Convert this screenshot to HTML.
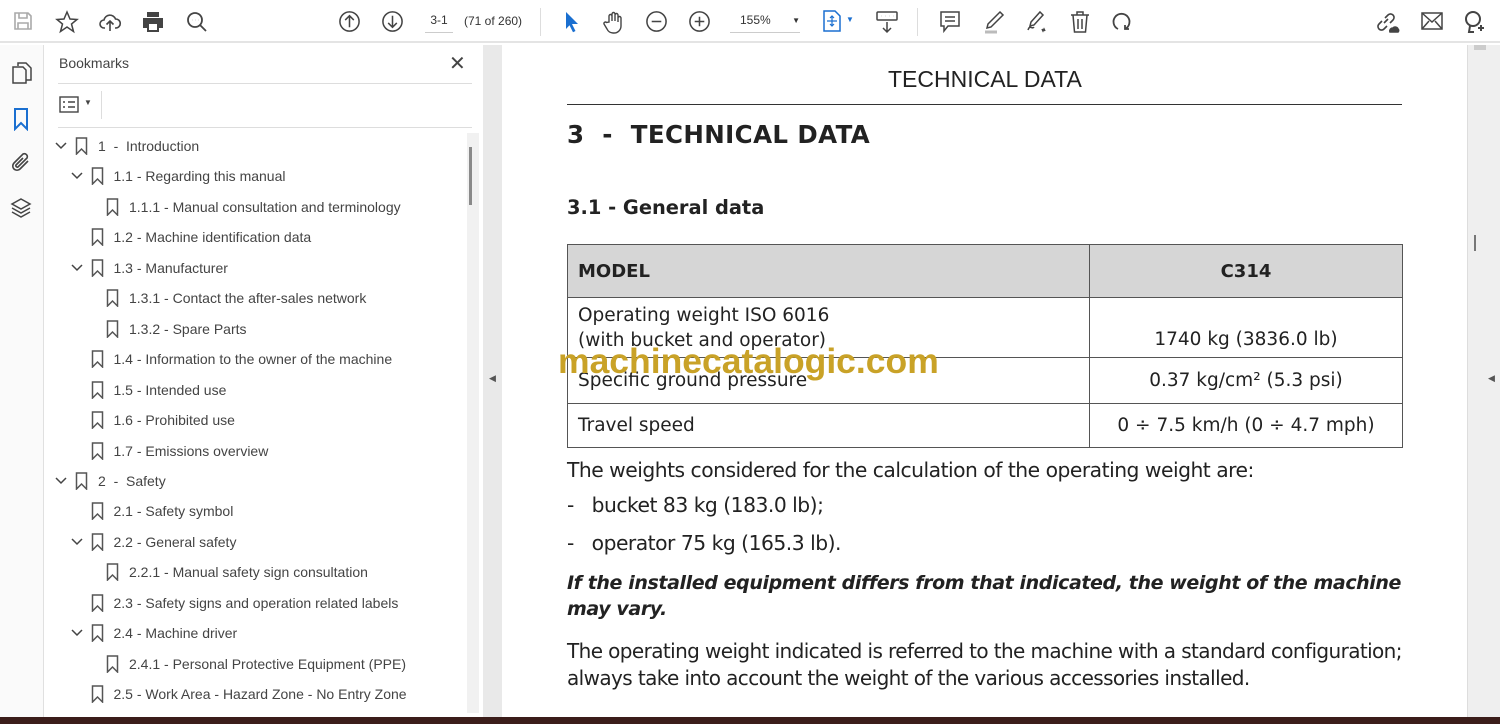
<!DOCTYPE html>
<html><head><meta charset="utf-8"><style>
*{margin:0;padding:0;box-sizing:border-box}
body{width:1500px;height:724px;overflow:hidden;background:#fff;font-family:"Liberation Sans",sans-serif;position:relative;color:#222}
.abs{position:absolute}
#tb{left:0;top:0;width:1500px;height:43px;background:#fff;border-bottom:2px solid #e4e4e4}
#rail{left:0;top:45px;width:44px;height:672px;background:#fafafa;border-right:1px solid #e0e0e0}
#panel{left:44px;top:45px;width:439px;height:672px;background:#fff}
#gut{left:483px;top:45px;width:19px;height:672px;background:#e9e9e9}
#page{left:502px;top:45px;width:965px;height:672px;background:#fff}
#rs{left:1467px;top:45px;width:33px;height:672px;background:#efefef;border-left:1px solid #ddd}
#bot{left:0;top:717px;width:1500px;height:7px;background:#3b1d1a}
.bm{position:absolute;font-size:14px;color:#444;white-space:nowrap;height:20px;line-height:20px}
.ic{position:absolute;top:10px}
.doc{position:absolute;font-family:"DejaVu Sans",sans-serif;color:#222;white-space:nowrap}
td{border:1px solid #555;font-size:18.5px;padding-left:10px;vertical-align:middle}
</style></head><body>
<div id="tb" class="abs">
<svg class="ic" style="left:12px" width="22" height="22" viewBox="0 0 22 22" fill="none" stroke="#aaa" stroke-width="1.6"><path d="M3 3h13l3 3v13H3z M7 3v5h8V3 M6 19v-6h10v6"/></svg>
<svg class="ic" style="left:55px" width="24" height="24" viewBox="0 0 24 24" fill="none" stroke="#444" stroke-width="1.5"><path d="M12 2l3 7 7 .5-5.5 4.5 2 7.5L12 17l-6.5 4.5 2-7.5L2 9.5 9 9z"/></svg>
<svg class="ic" style="left:98px" width="24" height="24" viewBox="0 0 24 24" fill="none" stroke="#444" stroke-width="1.6"><path d="M7 18H6a4 4 0 010-8 6 6 0 0111.5-1A4.5 4.5 0 0118 18h-1 M12 21V11 M8.5 14.5L12 11l3.5 3.5"/></svg>
<svg class="ic" style="left:141px" width="24" height="24" viewBox="0 0 24 24" fill="#444"><path d="M6 2h12v5H6z M2 8h20v10h-4v4H6v-4H2z"/><rect x="8" y="14" width="8" height="6" fill="#fff"/></svg>
<svg class="ic" style="left:185px" width="24" height="24" viewBox="0 0 24 24" fill="none" stroke="#444" stroke-width="1.8"><circle cx="10" cy="10" r="7"/><path d="M15 15l6 6"/><path d="M7 10h.1M10 10h.1M13 10h.1" stroke-width="2"/></svg>
<svg class="ic" style="left:338px" width="23" height="23" viewBox="0 0 24 24" fill="none" stroke="#444" stroke-width="1.6"><circle cx="12" cy="12" r="10"/><path d="M12 18V6M7.5 10.5L12 6l4.5 4.5"/></svg>
<svg class="ic" style="left:381px" width="23" height="23" viewBox="0 0 24 24" fill="none" stroke="#444" stroke-width="1.6"><circle cx="12" cy="12" r="10"/><path d="M12 6v12M7.5 13.5L12 18l4.5-4.5"/></svg>
<div class="abs" style="left:425px;top:13px;width:28px;font-size:12px;color:#333;border-bottom:1px solid #ccc;padding-bottom:5px;text-align:center">3-1</div>
<div class="abs" style="left:464px;top:14px;font-size:12px;color:#333">(71 of 260)</div>
<div class="abs" style="left:540px;top:8px;width:1px;height:28px;background:#ddd"></div>
<svg class="ic" style="left:563px" width="18" height="24" viewBox="0 0 18 24" fill="#1a6fd0"><path d="M3 2l12 12h-6l3.5 7-2.5 1.2-3.5-7L3 19z"/></svg>
<svg class="ic" style="left:602px" width="24" height="24" viewBox="0 0 24 24" fill="none" stroke="#444" stroke-width="1.4"><path d="M7 12V6a1.5 1.5 0 013 0v5V4a1.5 1.5 0 013 0v7V5a1.5 1.5 0 013 0v7V8a1.5 1.5 0 013 0v8a7 7 0 01-7 7h-1a7 7 0 01-6-4l-3-5a1.5 1.5 0 012.5-1.5z"/></svg>
<svg class="ic" style="left:645px" width="23" height="23" viewBox="0 0 24 24" fill="none" stroke="#444" stroke-width="1.6"><circle cx="12" cy="12" r="10"/><path d="M7 12h10"/></svg>
<svg class="ic" style="left:688px" width="23" height="23" viewBox="0 0 24 24" fill="none" stroke="#444" stroke-width="1.6"><circle cx="12" cy="12" r="10"/><path d="M7 12h10M12 7v10"/></svg>
<div class="abs" style="left:730px;top:13px;width:70px;font-size:12px;color:#333;border-bottom:1px solid #ccc;padding:0 0 5px 10px">155% <span style="float:right;font-size:8px;margin-top:3px">▼</span></div>
<svg class="ic" style="left:822px" width="20" height="22" viewBox="0 0 20 22" fill="none" stroke="#1a6fd0" stroke-width="1.5"><path d="M2 1h11l5 5v15H2z"/><path d="M10 6v10M5 11h10M8 8l2-2 2 2M8 14l2 2 2-2" stroke-width="1.2"/></svg>
<div class="abs" style="left:846px;top:15px;font-size:8px;color:#1a6fd0">▼</div>
<svg class="ic" style="left:875px" width="24" height="24" viewBox="0 0 24 24" fill="none" stroke="#444" stroke-width="1.5"><rect x="2" y="2" width="20" height="8" rx="1"/><path d="M6 6h.1M10 6h.1M14 6h.1M18 6h.1" stroke-width="2"/><path d="M12 12v10M8 18l4 4 4-4"/></svg>
<div class="abs" style="left:917px;top:8px;width:1px;height:28px;background:#ddd"></div>
<svg class="ic" style="left:939px" width="22" height="24" viewBox="0 0 22 24" fill="none" stroke="#444" stroke-width="1.5"><path d="M2 2h18v14H9l-4 5v-5H2z M6 7h10M6 11h10"/></svg>
<svg class="ic" style="left:982px" width="24" height="24" viewBox="0 0 24 24" fill="none" stroke="#444" stroke-width="1.5"><path d="M18 2l3 3-12 12-4 1 1-4z"/><path d="M3 22h12" stroke="#bbb" stroke-width="3"/></svg>
<svg class="ic" style="left:1024px" width="26" height="24" viewBox="0 0 26 24" fill="none" stroke="#444" stroke-width="1.5"><path d="M16 2l3 3-9 10-4 1 1-4z M4 20c2-6 4 0 6-3M18 19l1 2 1-2 1 2"/></svg>
<svg class="ic" style="left:1069px" width="22" height="24" viewBox="0 0 22 24" fill="none" stroke="#444" stroke-width="1.5"><path d="M2 5h18M8 5V2h6v3M4 5l1.5 17h11L18 5M9 9v10M13 9v10"/></svg>
<svg class="ic" style="left:1111px" width="22" height="24" viewBox="0 0 22 24" fill="none" stroke="#444" stroke-width="1.8"><path d="M14 19a8 8 0 10-7 0M14 15v4h4"/></svg>
<svg class="ic" style="left:1375px" width="26" height="24" viewBox="0 0 26 24" fill="none" stroke="#444" stroke-width="1.6"><path d="M10 8l3-3a3.5 3.5 0 015 5l-3 3M12 16l-3 3a3.5 3.5 0 01-5-5l3-3M9 13l4-4"/><path d="M15 22a3 3 0 013-4 3 3 0 015 1 2 2 0 010 3z" fill="#444"/></svg>
<svg class="ic" style="left:1420px" width="24" height="22" viewBox="0 0 24 22" fill="none" stroke="#444" stroke-width="1.5"><rect x="2" y="3" width="20" height="16"/><path d="M2 3l10 9 10-9M2 19l7-8M22 19l-7-8"/></svg>
<svg class="ic" style="left:1463px" width="24" height="24" viewBox="0 0 24 24" fill="none" stroke="#444" stroke-width="2"><circle cx="10" cy="9" r="7"/><path d="M7 16l-1 6h5M18 15v6M15 18h6"/></svg>
</div>
<div id="rail" class="abs">
<svg class="abs" style="left:11px;top:16px" width="22" height="24" viewBox="0 0 22 24" fill="none" stroke="#444" stroke-width="1.5"><path d="M7 5V2h8l5 5v12h-5M2 6h10l3 3v13H2z"/></svg>
<svg class="abs" style="left:11px;top:62px" width="20" height="24" viewBox="0 0 20 24" fill="none" stroke="#1a6fd0" stroke-width="2"><path d="M4 2h12v20l-6-6-6 6z"/></svg>
<svg class="abs" style="left:9px;top:106px" width="24" height="24" viewBox="0 0 24 24" fill="none" stroke="#444" stroke-width="1.6"><path d="M19 10l-8 8a4 4 0 01-6-6l9-9a3 3 0 014 4l-9 9a1.5 1.5 0 01-2-2l7-7"/></svg>
<svg class="abs" style="left:9px;top:151px" width="24" height="24" viewBox="0 0 24 24" fill="none" stroke="#444" stroke-width="1.5"><path d="M12 3l9 5-9 5-9-5z M3 12l9 5 9-5 M3 16l9 5 9-5"/></svg>
</div>
<div id="panel" class="abs">
<div class="abs" style="left:15px;top:10px;font-size:14px;color:#444">Bookmarks</div>
<div class="abs" style="left:405px;top:6px;font-size:20px;color:#444">✕</div>
<div class="abs" style="left:14px;top:38px;width:414px;height:1px;background:#ddd"></div>
<svg class="abs" style="left:15px;top:51px" width="20" height="18" viewBox="0 0 20 18" fill="none" stroke="#444" stroke-width="1.4"><rect x="1" y="1" width="18" height="15"/><path d="M4 6h2M9 6h7M4 11h2M9 11h7"/></svg>
<div class="abs" style="left:40px;top:53px;font-size:8px;color:#444">▼</div>
<div class="abs" style="left:57px;top:46px;width:1px;height:28px;background:#ddd"></div>
<div class="abs" style="left:14px;top:82px;width:414px;height:1px;background:#ddd"></div>
<div class="abs" style="left:423px;top:88px;width:12px;height:580px;background:#f1f1f1"></div>
<div class="abs" style="left:425px;top:102px;width:3px;height:58px;background:#8a8a8a"></div>
</div>
<div id="gut" class="abs"><div class="abs" style="left:6px;top:328px;font-size:9px;color:#555">◀</div></div>
<div id="rs" class="abs"><div class="abs" style="left:6px;top:0;width:12px;height:5px;background:#ccc"></div><div class="abs" style="left:6px;top:190px;width:2px;height:16px;background:#777"></div><div class="abs" style="left:20px;top:328px;font-size:9px;color:#555">◀</div></div>
<div id="bm"></div>
<div id="page" class="abs"></div>
<div class="doc" style="left:888px;top:66px;font-size:23px;font-family:'Liberation Sans',sans-serif">TECHNICAL DATA</div>
<div class="abs" style="left:567px;top:104px;width:835px;height:1px;background:#333"></div>
<div class="doc" style="left:567px;top:120px;font-size:24.5px;font-weight:bold;letter-spacing:0.4px">3&nbsp; -&nbsp; TECHNICAL DATA</div>
<div class="doc" style="left:567px;top:196px;font-size:19.4px;font-weight:bold">3.1 - General data</div>
<table class="abs" style="left:567px;top:244px;width:836px;border-collapse:collapse;font-family:'DejaVu Sans',sans-serif">
<tr style="height:53px;background:#d6d6d6"><td style="width:522px;font-weight:bold;font-size:18px">MODEL</td><td style="font-weight:bold;font-size:18px;text-align:center;padding:0">C314</td></tr>
<tr style="height:60px"><td style="line-height:25px">Operating weight ISO 6016<br>(with bucket and operator)</td><td style="text-align:center;padding:24px 0 0">1740 kg (3836.0 lb)</td></tr>
<tr style="height:46px"><td>Specific ground pressure</td><td style="text-align:center;padding:0">0.37 kg/cm² (5.3 psi)</td></tr>
<tr style="height:44px"><td>Travel speed</td><td style="text-align:center;padding:0">0 ÷ 7.5 km/h (0 ÷ 4.7 mph)</td></tr>
</table>
<div class="doc" style="left:558px;top:341px;font-size:35.5px;font-weight:bold;color:#c9a227;font-family:'Liberation Sans',sans-serif">machinecatalogic.com</div>
<div class="doc" style="left:567px;top:458px;font-size:20.3px;letter-spacing:-0.5px">The weights considered for the calculation of the operating weight are:</div>
<div class="doc" style="left:567px;top:493px;font-size:20.3px;letter-spacing:-0.5px">-&nbsp;&nbsp; bucket 83 kg (183.0 lb);</div>
<div class="doc" style="left:567px;top:531px;font-size:20.3px;letter-spacing:-0.5px">-&nbsp;&nbsp; operator 75 kg (165.3 lb).</div>
<div class="doc" style="left:567px;top:570px;font-size:19px;font-weight:bold;font-style:italic;line-height:26px;letter-spacing:-0.4px">If the installed equipment differs from that indicated, the weight of the machine<br>may vary.</div>
<div class="doc" style="left:567px;top:638px;font-size:20px;line-height:27px;letter-spacing:-0.6px">The operating weight indicated is referred to the machine with a standard configuration;<br>always take into account the weight of the various accessories installed.</div>
<div id="bot" class="abs"></div>
<script>
var items=[[0,"1  -  Introduction",1],[1,"1.1 - Regarding this manual",1],[2,"1.1.1 - Manual consultation and terminology",0],[1,"1.2 - Machine identification data",0],[1,"1.3 - Manufacturer",1],[2,"1.3.1 - Contact the after-sales network",0],[2,"1.3.2 - Spare Parts",0],[1,"1.4 - Information to the owner of the machine",0],[1,"1.5 - Intended use",0],[1,"1.6 - Prohibited use",0],[1,"1.7 - Emissions overview",0],[0,"2  -  Safety",1],[1,"2.1 - Safety symbol",0],[1,"2.2 - General safety",1],[2,"2.2.1 - Manual safety sign consultation",0],[1,"2.3 - Safety signs and operation related labels",0],[1,"2.4 - Machine driver",1],[2,"2.4.1 - Personal Protective Equipment (PPE)",0],[1,"2.5 - Work Area - Hazard Zone - No Entry Zone",0]];
var h="";
items.forEach(function(it,i){var y=136+i*30.45;var tx=98+it[0]*15.5;
if(it[2])h+='<svg class="abs" style="left:'+(tx-43)+'px;top:'+(y+5)+'px" width="12" height="10" viewBox="0 0 12 10" fill="none" stroke="#444" stroke-width="1.5"><path d="M1 2l5 5 5-5"/></svg>';
h+='<svg class="abs" style="left:'+(tx-23)+'px;top:'+(y+1)+'px" width="13" height="18" viewBox="0 0 13 18" fill="none" stroke="#555" stroke-width="1.5"><path d="M1.5 1h10v16l-5-5-5 5z"/></svg>';
h+='<div class="bm" style="left:'+tx+'px;top:'+y+'px">'+it[1].replace(/  /g,"&nbsp; ")+'</div>';});
document.getElementById("bm").innerHTML=h;
</script>
</body></html>
